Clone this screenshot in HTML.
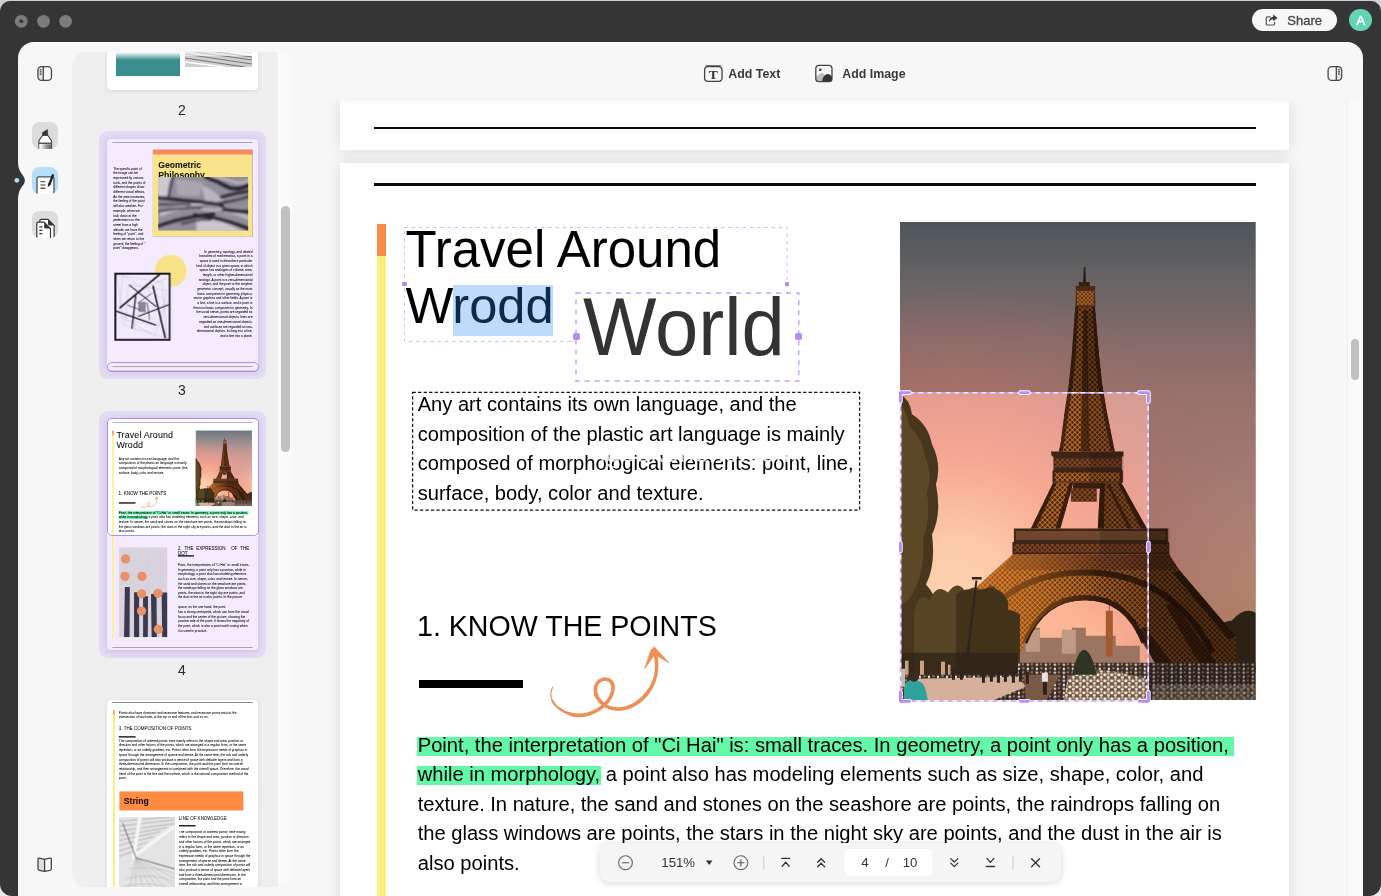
<!DOCTYPE html>
<html lang="en">
<head>
<meta charset="utf-8">
<title>PDF Editor</title>
<style>
*{box-sizing:border-box;margin:0;padding:0}
html,body{width:1381px;height:896px;overflow:hidden}
body{background:linear-gradient(#cdcdd4,#cdcdd4 40%,#ececee);font-family:"Liberation Sans",Arial,sans-serif;position:relative;color:#000}
.abs{position:absolute}
#frame{position:absolute;left:0;top:1px;width:1380.500px;height:895px;background:#353535;border-radius:10px 10px 12px 12px}
#panel{position:absolute;left:18px;top:42px;width:1345px;height:854px;background:#f7f7f7;border-radius:16px 16px 0 0;border-top:2px solid #fff;overflow:hidden}
#share{position:absolute;left:1252px;top:9px;width:84.600px;height:22.400px;border-radius:11.200px;background:#f7f7f7;color:#444;font-size:13px;line-height:22.800px}
#avatar{position:absolute;left:1349.400px;top:8.900px;width:22.600px;height:22.600px;border-radius:50%;background:#62d3b6;color:#fff;font-size:13.500px;line-height:23.500px;text-align:center;-webkit-text-stroke:.400px #fff}
#thumbs{position:absolute;left:72px;top:51.500px;width:220px;height:835px;background:#efefef;border-radius:14px;overflow:hidden}
#ttrack{position:absolute;left:205.600px;top:0;width:14.800px;height:836px;background:#fafafa}
#tthumb{position:absolute;left:209.100px;top:154.100px;width:8.800px;height:246.800px;border-radius:4.400px;background:#c1c1c1}
.tnum{position:absolute;width:40px;text-align:center;font-size:14px;color:#2b2b2b;left:90px}
#doc{position:absolute;left:293px;top:44px;width:1054px;height:852px;overflow:hidden}
.page{position:absolute;left:47px;width:949px;background:#fff;box-shadow:0 0 14px rgba(0,0,0,.12)}
#strack{position:absolute;left:1347px;top:100px;width:16px;height:796px;background:#fafafa;border-left:1px solid #f0f0f0}
#sthumb{position:absolute;left:1350.800px;top:339px;width:8.600px;height:40.600px;border-radius:4.300px;background:#c1c1c1}
.tb{position:absolute;top:66px;font-size:12.400px;color:#383838;font-weight:bold;line-height:16px;white-space:nowrap}
.zt{position:absolute;top:11.500px;font-size:13.200px;line-height:16px;color:#333;white-space:nowrap}
#zoombar{position:absolute;left:600px;top:843px;width:461px;height:39px;border-radius:9px;background:#f5f5f5;box-shadow:0 1px 7px rgba(0,0,0,.16)}
/* page 4 content (page coordinate system: 949px wide) */
.pg{position:absolute;left:0;top:0;width:949px;transform-origin:0 0}
.pg div,.pg span.a,.pg svg{position:absolute}
.t{white-space:nowrap;line-height:1}
.hl{background:#63f8a8}
.thp .t{-webkit-text-stroke:.250px currentColor}
.thp .pg{will-change:transform}
</style>
</head>
<body>
<div id="root" style="position:absolute;left:0;top:0;width:1381px;height:896px;will-change:transform">
<svg width="0" height="0" style="position:absolute">
<defs>
<linearGradient id="sky" x1="0" y1="0" x2="0" y2="1">
<stop offset="0" stop-color="#6c777c"/><stop offset=".12" stop-color="#8f8a8d"/><stop offset=".25" stop-color="#ba9592"/><stop offset=".36" stop-color="#d39d95"/><stop offset=".5" stop-color="#dea79c"/><stop offset=".65" stop-color="#f2b3a1"/><stop offset=".76" stop-color="#fbb897"/><stop offset=".88" stop-color="#f4aa84"/><stop offset="1" stop-color="#e89a70"/>
</linearGradient>
<radialGradient id="glow" cx="55" cy="372" r="310" gradientUnits="userSpaceOnUse">
<stop offset="0" stop-color="#fdd3b0" stop-opacity="1"/><stop offset=".18" stop-color="#fccaa8" stop-opacity=".97"/><stop offset=".44" stop-color="#f8a892" stop-opacity=".92"/><stop offset=".66" stop-color="#ec9c8e" stop-opacity=".72"/><stop offset=".82" stop-color="#e09890" stop-opacity=".3"/><stop offset="1" stop-color="#d89890" stop-opacity="0"/>
</radialGradient>
<radialGradient id="glow2" cx="185" cy="430" r="70" gradientUnits="userSpaceOnUse">
<stop offset="0" stop-color="#ffc49a" stop-opacity="1"/><stop offset="1" stop-color="#fbb088" stop-opacity="0"/>
</radialGradient>
<pattern id="lat" width="5" height="5" patternUnits="userSpaceOnUse">
<rect width="5" height="5" fill="#38200f"/>
<path d="M0 0L5 5M5 0L0 5" stroke="#dc7a2a" stroke-width=".95"/>
</pattern>
<pattern id="lat2" width="4" height="4" patternUnits="userSpaceOnUse">
<rect width="4" height="4" fill="#5a2c12"/>
<path d="M0 0L4 4M4 0L0 4" stroke="#f09038" stroke-width="1.1"/>
</pattern>
<pattern id="latd" width="5" height="5" patternUnits="userSpaceOnUse">
<rect width="5" height="5" fill="#3a2014"/>
<path d="M0 0L5 5M5 0L0 5" stroke="#8a4a22" stroke-width="1.1"/>
</pattern>
<pattern id="crowd" width="9" height="8" patternUnits="userSpaceOnUse">
<rect width="9" height="8" fill="#3a2c26"/>
<circle cx="2" cy="2" r="1.3" fill="#d8c4b4"/><circle cx="6.5" cy="5.5" r="1.2" fill="#8d7466"/><circle cx="6" cy="1.5" r="1" fill="#c59a7c"/><rect x="1" y="5" width="2" height="2.4" fill="#e6e0da"/>
</pattern>
<pattern id="flow" width="7" height="6" patternUnits="userSpaceOnUse">
<rect width="7" height="6" fill="#6a5646"/>
<circle cx="2" cy="2" r="1.6" fill="#fbeee0"/><circle cx="5.5" cy="4.5" r="1.5" fill="#f3dcc6"/><circle cx="5.5" cy="1" r="1" fill="#e9c9a9"/>
</pattern>
<linearGradient id="wavebg" x1="0" y1="0" x2="0" y2="1"><stop offset="0" stop-color="#a39fa9"/><stop offset=".5" stop-color="#85808c"/><stop offset="1" stop-color="#a09ba6"/></linearGradient>
<pattern id="wave" width="14" height="12" patternUnits="userSpaceOnUse"><path d="M0 3Q3.500 0 7 3T14 3M0 9Q3.500 6 7 9T14 9" fill="none" stroke="#2e2a38" stroke-width="2.200"/></pattern>
<linearGradient id="legglow" x1="60" y1="0" x2="200" y2="0" gradientUnits="userSpaceOnUse"><stop offset="0" stop-color="#ff9630" stop-opacity=".55"/><stop offset=".55" stop-color="#ff9630" stop-opacity=".32"/><stop offset="1" stop-color="#ff9630" stop-opacity="0"/></linearGradient>
<linearGradient id="legshade" x1="190" y1="0" x2="300" y2="0" gradientUnits="userSpaceOnUse"><stop offset="0" stop-color="#24120a" stop-opacity="0"/><stop offset=".5" stop-color="#24120a" stop-opacity=".32"/><stop offset="1" stop-color="#24120a" stop-opacity=".42"/></linearGradient>
<symbol id="eiffel" viewBox="0 0 356 478" preserveAspectRatio="none">
<rect width="356" height="478" fill="url(#sky)"/>
<rect width="356" height="478" fill="url(#glow)"/>
<rect width="356" height="478" fill="url(#glow2)"/>
<!-- distant buildings under the arch -->
<path d="M120 430v-18h6v-7h14v10h22v-4h10v-6h14v8h30v10h24v22h-120z" fill="#9a7662"/>
<path d="M126 407h14v22h-14zM162 407h14v24h-14z" fill="#c09a84"/>
<path d="M206 388h7v46h-7z" fill="#a65a30"/><path d="M209 380h1v10h-1z" fill="#a65a30"/>
<!-- right trees -->
<path d="M296 424q8-16 18-12q6-14 18-14q12-14 24-8v60h-60z" fill="#3e2e1e"/>
<!-- tower: antenna, cabin -->
<path d="M184 45h1.400l1 19h-3.400z" fill="#3b2a22"/>
<path d="M179 60h11v4h-11z" fill="#45301f"/>
<path d="M175.500 64h20.200l-.6 4 .6 17.500h-20.200l.6-17.500z" fill="#6a3a1a"/>
<path d="M177 69h17v14h-17z" fill="url(#lat2)"/>
<!-- spire -->
<path d="M175.400 85h19.700l4.100 48 3.100 29 5 29 5.800 29 1.900 9h-56l1.900-9 3.700-29 4.400-29 2.900-29z" fill="url(#lat)"/>
<path d="M183.500 88h3.400l2.500 141h-8.400z" fill="#351a0b" opacity=".7"/>
<path d="M175.400 85l-3.500 48-2.900 29-4.400 29-3.700 29-1.900 9h4l5.500-38 4.500-29 3-29 2.500-48zM195.100 85l4.100 48 3.100 29 5 29 5.800 29 1.900 9h-4l-7.700-38-5-29-3-29-2.300-48z" fill="#2e170a" opacity=".7"/>
<!-- second platform -->
<path d="M151 229h72.600v5h-1.600v14h1v12.400h-70.400v-12.400h1v-14h-1.600z" fill="#3e2416"/>
<path d="M154 236h67v9h-67z" fill="url(#latd)"/>
<path d="M155 250h65v9h-65z" fill="url(#lat)"/>
<!-- mid legs -->
<path d="M153.300 260.400h20.100l-12.900 45.600h-29.500z" fill="url(#lat)"/>
<path d="M200.500 260.400h21l25.500 45.600h-49z" fill="url(#lat)"/>
<path d="M171 266h26v13.400h-26z" fill="url(#latd)"/>
<path d="M173.400 260.400h27.100l.4 6h-28z" fill="#3a1d0d"/>
<path d="M153.300 260.400l-22.300 45.600h5l21-45.600zM221.500 260.400l25.500 45.600h-6l-23-45.600z" fill="#2e170a" opacity=".85"/>
<path d="M173.400 260.400l-12.900 45.600h-5l14-45.600zM200.500 260.400l-2.500 45.600h6l1-45.600z" fill="#2e170a" opacity=".85"/>
<path d="M210 262l22 44h-4l-21-44z" fill="#2e170a" opacity=".7"/>
<!-- first platform -->
<path d="M114 306h154v13.500h1.500v12.500h-157v-12.500h1.500z" fill="#3c2619"/>
<path d="M116 308.500h150v9h-150z" fill="#70472c"/>
<path d="M114 321.500h155v8.500h-155z" fill="url(#latd)"/>
<!-- base with arch -->
<path d="M112.500 332h157l10 15.500 56.500 66v32h-78l-14-27q-18-41-59-41q-41 0-59 41l-14 27h-60v-38l26-44z" fill="url(#lat)"/>
<path d="M112.500 332h157l8 15.500h-174z" fill="url(#latd)"/>
<path d="M62 430q36-80 123-80q87 0 128 80" fill="none" stroke="#331a0c" stroke-width="6"/>
<path d="M125 420q18-45 60-45q42 0 59 45" fill="none" stroke="#331a0c" stroke-width="5"/>
<path d="M279.500 347.500l56.500 66-7 3-56-66z" fill="#2e170a" opacity=".8"/>
<path d="M258 445l-22-36 9-5 31 41zM302 445l-36-62 8-4 46 66z" fill="#2a1408" opacity=".7"/>
<path d="M100 380l-30 50h12l28-50z" fill="#2a1408" opacity=".6"/>
<!-- shading -->
<path d="M186 88l9 -3 4.100 48 3.100 29 5 29 5.800 29 1.900 9h-27z" fill="#24120a" opacity=".28"/>
<path d="M200.500 260.400h21l25.500 45.600h-49z" fill="#24120a" opacity=".38"/>
<path d="M190 229h33.600v31.400h-33.600z" fill="#24120a" opacity=".25"/>
<path d="M200 306h69.500v26h-69.500z" fill="#24120a" opacity=".25"/>
<path d="M190 332h79.500l10 15.500 56.500 66v32h-78l-14-27q-16-38-54-41z" fill="url(#legshade)"/>
<path d="M112.500 332H200V378.500Q192 377.500 185 377.500Q144 377.500 126 418.500L112 445.500H52V407.500L78 363.500Z" fill="url(#legglow)"/>
<!-- left trees -->
<path d="M0 172q10 5 12 20q16 10 20 30q10 20 4 40q6 30-4 50q4 30-6 50q10 10 14 30l2 66h-42z" fill="#46361d"/>
<path d="M0 182q8 8 9 22q14 12 16 30q8 18 2 36q4 26-4 46q2 28-6 46q-8 20-17 20z" fill="#5c4727"/>
<path d="M14 390q6-24 16-12q6-18 18-8q10-14 18 0q8-10 18 0q8-14 14 0l8 10v76h-92z" fill="#574425"/>
<path d="M56 372q10-8 22-4q14-6 24 2l6 8v76h-52z" fill="#42321a"/>
<path d="M96 392q12-10 24 0v60h-24z" fill="#42321a"/>
<path d="M0 430h118v22h-118z" fill="#2e2318" opacity=".75"/><g fill="#c9a284"><rect x="5" y="438" width="3.500" height="22"/><rect x="20" y="438" width="4" height="24"/><rect x="41" y="439" width="4" height="24"/><rect x="48" y="442" width="2.500" height="14"/></g>
<!-- lamp post -->
<path d="M75.500 358h2l-12.500 106h-2.600z" fill="#2b2622"/><path d="M72 354.500h9.500l.5 2.500h-10z" fill="#2b2622"/>
<!-- ground, crowd -->
<path d="M0 452H118V440H356V478H0Z" fill="url(#crowd)"/>
<path d="M14 456l104 -2 8 10-34 14h-78z" fill="#d6b09a"/>
<path d="M124 452h36l-14 26h-20z" fill="#7a5844"/>
<path d="M168 454q30-12 60-2l20 4v22h-84z" fill="url(#flow)"/>
<path d="M252 462h104v16h-104z" fill="url(#flow)" opacity=".55"/>
<path d="M176 438q8-22 17 0l4 14h-25z" fill="#2e3424"/>
<g fill="#2a2320"><rect x="82" y="448" width="3" height="12"/><rect x="90" y="447" width="3" height="12"/><rect x="97" y="449" width="3" height="11"/><rect x="104" y="447" width="3" height="12"/><rect x="112" y="448" width="3" height="12"/><rect x="119" y="447" width="3" height="12"/><rect x="126" y="449" width="3" height="12"/><rect x="143" y="452" width="4" height="20"/><rect x="52" y="447" width="3" height="10"/><rect x="60" y="447" width="3" height="10"/></g>
<rect x="142" y="450" width="6" height="9" fill="#e9e4e0"/>
<path d="M4 478v-12q0-8 6-8h6q8 0 10 10l2 10z" fill="#2fa39a"/><circle cx="14" cy="454" r="5" fill="#3a2a24"/>
<rect x="0" y="446" width="5" height="18" fill="#c9b8b0"/>
</symbol>
</defs>
</svg>
<div id="frame"></div>
<svg class="abs" style="left:0;top:0" width="80" height="40"><g fill="#7c7c7c"><circle cx="21.300" cy="21.300" r="6.400"/><circle cx="43.500" cy="21.300" r="6.400"/><circle cx="65.600" cy="21.300" r="6.400"/></g><circle cx="21.300" cy="21.300" r="2" fill="#3a3a3a"/></svg>
<div id="share"><svg class="abs" style="left:12px;top:4px" width="16" height="15" viewBox="0 0 16 15"><path d="M6.500 3.800H3.300Q2.300 3.800 2.300 4.800V11Q2.300 12 3.300 12H9.600Q10.600 12 10.600 11V9" fill="none" stroke="#555" stroke-width="1.200"/><path d="M9.200 1.600L13.600 5L9.200 8.300V6.300Q6.300 6.300 4.900 9.300Q5.200 4 9.200 3.700Z" fill="#3a3a3a"/></svg><span style="position:absolute;left:35.300px;top:.800px;-webkit-text-stroke:.300px #444">Share</span></div>
<div id="avatar">A</div>
<div id="panel"></div>
<!-- left rail bump + dot -->
<svg class="abs" style="left:17px;top:158px" width="12" height="46" viewBox="0 0 12 46"><path d="M0 0H1V3C1 10 3 13.500 5.200 16.500C7 19 7.900 20.500 7.900 22.400C7.900 24.300 7 25.800 5.200 28.300C3 31.300 1 34.800 1 42.500V46H0Z" fill="#353535"/></svg>
<svg class="abs" style="left:13px;top:176px" width="8" height="9" viewBox="0 0 8 9"><circle cx="3.850" cy="4.300" r="2.350" fill="#b4dcf8"/></svg>
<!-- rail icons -->
<svg class="abs" style="left:36px;top:64px" width="18" height="18" viewBox="0 0 18 18"><path d="M1.900 5.800Q1.900 2.600 5.100 2.600H7.200V16.400H5.100Q1.900 16.400 1.900 13.200Z" fill="#e2e2e2"/><rect x="1.900" y="2.600" width="13.600" height="13.800" rx="3.600" fill="none" stroke="#484848" stroke-width="1.300"/><path d="M7.300 2.600V16.400" stroke="#484848" stroke-width="1.300"/><path d="M3.800 5.700H5.500M3.800 7.900H5.500M3.800 10.100H5.500" stroke="#333" stroke-width="1.100"/></svg>
<div class="abs" style="left:31.500px;top:122px;width:26.600px;height:26.800px;border-radius:7.500px;background:#dcdcdc;overflow:hidden">
<svg class="abs" style="left:0;top:0" width="27" height="27" viewBox="31.500 122 27 27"><defs><linearGradient id="hg" x1="0" y1="0" x2="1" y2="0"><stop offset="0" stop-color="#fff"/><stop offset=".25" stop-color="#ddd"/><stop offset=".6" stop-color="#999"/><stop offset="1" stop-color="#666"/></linearGradient></defs>
<path d="M42.100 135.300L38.400 140.600V150H51V140.600L47.200 135.300Z" fill="#fff" stroke="#444" stroke-width="1.100" stroke-linejoin="round"/>
<path d="M39 144.300H50.400V150H39Z" fill="url(#hg)"/>
<path d="M38.400 142.400H51V143.900H38.400Z" fill="#555"/>
<path d="M42.100 132.400L47 129.600L47.300 135.300H42.100Z" fill="#333" stroke="#333" stroke-width=".6" stroke-linejoin="round"/></svg></div>
<div class="abs" style="left:31.500px;top:166.700px;width:26.600px;height:27px;border-radius:7.500px;background:#b4defa;overflow:hidden">
<svg class="abs" style="left:0;top:0" width="27" height="27" viewBox="31.500 166.700 27 27">
<path d="M36.500 195V178.300Q36.500 176.500 38.300 176.500H51.700Q53.500 176.500 53.500 178.300V195Z" fill="#fff" stroke="#4a4f55" stroke-width="1.300"/>
<path d="M40 181.500H44.800M40 184.700H44.800" stroke="#333" stroke-width="1.100"/><path d="M40 188H44.800" stroke="#555" stroke-width="1.600"/>
<path d="M52.300 175.100L49.200 183.300" stroke="#222" stroke-width="2.500" stroke-linecap="round"/><path d="M47.800 182.800L50.400 184L47.200 187.100Z" fill="#222"/></svg></div>
<div class="abs" style="left:31.500px;top:211px;width:26.600px;height:26.600px;border-radius:7.500px;background:#dcdcdc;overflow:hidden">
<svg class="abs" style="left:0;top:0" width="27" height="27" viewBox="31.500 211 27 27">
<path d="M39.300 239V220.800Q39.300 219.400 40.700 219.400H47.500L53.600 225.500V239Z" fill="#fff" stroke="#333" stroke-width="1.200" stroke-linejoin="round"/>
<path d="M47.500 219.600V224Q47.500 225.400 48.900 225.400H53.400Z" fill="#333"/>
<path d="M36.300 239V223.600Q36.300 222.200 37.700 222.200H43.600L50 228.600V239Z" fill="#fff" stroke="#333" stroke-width="1.200" stroke-linejoin="round"/>
<path d="M43.700 222.500V227.200Q43.700 228.500 45 228.500H49.700Z" fill="#333"/>
<path d="M38.800 226.800H41.900M38.800 230.300H41.900M38.800 233.600H41.900" stroke="#333" stroke-width="1.200"/></svg></div>
<svg class="abs" style="left:36px;top:855px" width="18" height="19" viewBox="36 855 18 19"><path d="M38 859.300Q38 857.900 39.400 858.100L44.600 859.200V871.400L39.400 870.400Q38 870.100 38 868.800Z" fill="#dedede"/><path d="M44.600 859.300L49.900 858.100Q51.300 857.900 51.300 859.300V868.800Q51.300 870.100 49.900 870.400L44.600 871.400L39.400 870.400Q38 870.100 38 868.800V859.300Q38 857.900 39.400 858.100ZM44.600 859.300V871.400" fill="none" stroke="#444" stroke-width="1.300" stroke-linejoin="round"/></svg>
<div id="thumbs"><div class="abs" style="left:0;top:.500px;width:220px;height:835px">
<div class="abs" style="left:35px;top:-20px;width:150.900px;height:57.800px;background:#fff;border-radius:4px;box-shadow:0 1px 5px rgba(0,0,0,.10);overflow:hidden"><div class="abs" style="left:9.300px;top:20px;width:63.500px;height:23.700px;background:linear-gradient(#fff 0,#3a8e8e 8px)"></div><svg class="abs" style="left:78px;top:20px" width="67" height="15" viewBox="0 0 67 15"><rect width="67" height="15" fill="#cfcfcf"/><path d="M0 2L67 12M0 6L60 15M10 0L67 8M30 0L67 5" stroke="#555" stroke-width="1.200" opacity=".7"/><path d="M0 10L40 15M45 0L67 3" stroke="#fff" stroke-width="1.500"/><rect width="67" height="4" fill="#fff" opacity=".6"/></svg></div>
<div class="tnum" style="top:50.300px">2</div>
<div class="abs" style="left:27px;top:79.200px;width:167px;height:247.500px;border-radius:9px;background:#e3dbf3"></div>
<div class="abs thp" style="left:35px;top:87.200px;width:150.900px;height:231px;background:#f4ecfe;border-radius:4px;overflow:hidden;box-shadow:0 1px 6px rgba(80,50,140,.2)"><div class="pg" style="transform:scale(0.15901)">
<div style="left:34px;top:20.8px;width:882px;height:2.6px;background:#0a0a0a"></div>
<div style="left:288px;top:66px;width:626px;height:33px;background:#f58a5c"></div>
<div style="left:288px;top:98.7px;width:626px;height:512px;background:#f9e48c"></div>
<div class="t" style="left:322px;top:139.87px;font-size:54.5px;line-height:54.5px;font-weight:bold;color:#111">Geometric</div>
<div class="t" style="left:322px;top:201.87px;font-size:54.5px;line-height:54.5px;font-weight:bold;color:#111">Philosophy</div>
<svg style="left:322px;top:239px" width="566" height="338" viewBox="0 0 566 338"><defs><filter id="wb" x="-10%" y="-10%" width="120%" height="120%"><feGaussianBlur stdDeviation="8"/></filter><clipPath id="wc"><rect width="566" height="338"/></clipPath></defs><g clip-path="url(#wc)"><rect width="566" height="338" fill="#9d99a4"/><g filter="url(#wb)" fill="none" stroke-linecap="round"><path d="M-10 -10L95 -10L65 118L-10 128Z" fill="#dedae2" stroke="none"/><path d="M240 268Q380 250 540 345L240 350Z" fill="#dcd8e0" stroke="none"/><path d="M270 50Q360 80 410 150L300 165Z" fill="#c9c5ce" stroke="none"/><path d="M110 20Q200 10 280 40L260 120L120 115Z" fill="#b8b4be" stroke="none"/><path d="M20 232Q140 184 270 178" stroke="#dad6de" stroke-width="26"/><path d="M420 215Q500 225 575 262" stroke="#cfcbd4" stroke-width="22"/><path d="M299 0Q360 20 425 58T585 44" stroke="#28232f" stroke-width="24"/><path d="M330 -8Q420 8 470 28T585 12" stroke="#e0dce4" stroke-width="10"/><path d="M-5 128Q148 148 289 160T400 192T580 220" stroke="#28232f" stroke-width="21"/><path d="M-5 220Q148 192 279 188" stroke="#433e4d" stroke-width="14"/><path d="M-5 310Q123 264 249 246T345 234" stroke="#28232f" stroke-width="21"/><path d="M229 238Q350 254 450 284T580 332" stroke="#28232f" stroke-width="21"/><path d="M395 127Q500 97 580 88" stroke="#2f2a38" stroke-width="19"/><path d="M385 164Q500 148 580 120" stroke="#433e4d" stroke-width="16"/><path d="M92 0Q72 60 64 128" stroke="#433e4d" stroke-width="16"/><path d="M150 294Q260 264 330 270" stroke="#433e4d" stroke-width="12"/><path d="M-5 172Q100 172 200 174" stroke="#565160" stroke-width="14"/><path d="M280 200Q340 215 400 200" stroke="#d8d4dc" stroke-width="12"/></g><rect width="566" height="338" fill="url(#wave)" opacity=".3"/></g></svg>
<div class="t" style="left:39px;top:175.96px;font-size:20.13px;line-height:20.13px;">The specific point of</div>
<div class="t" style="left:39px;top:205.46px;font-size:20.13px;line-height:20.13px;">the image can be</div>
<div class="t" style="left:39px;top:234.96px;font-size:20.13px;line-height:20.13px;">expressed by various</div>
<div class="t" style="left:39px;top:264.46px;font-size:20.13px;line-height:20.13px;">tools, and the points of</div>
<div class="t" style="left:39px;top:293.96px;font-size:20.13px;line-height:20.13px;">different shapes show</div>
<div class="t" style="left:39px;top:323.46px;font-size:20.13px;line-height:20.13px;">different visual effects.</div>
<div class="t" style="left:39px;top:352.96px;font-size:20.13px;line-height:20.13px;">As the area increases,</div>
<div class="t" style="left:39px;top:382.46px;font-size:20.13px;line-height:20.13px;">the feeling of the point</div>
<div class="t" style="left:39px;top:411.96px;font-size:20.13px;line-height:20.13px;">will also weaken. For</div>
<div class="t" style="left:39px;top:441.46px;font-size:20.13px;line-height:20.13px;">example, when we</div>
<div class="t" style="left:39px;top:470.96px;font-size:20.13px;line-height:20.13px;">look down at the</div>
<div class="t" style="left:39px;top:500.46px;font-size:20.13px;line-height:20.13px;">pedestrians on the</div>
<div class="t" style="left:39px;top:529.96px;font-size:20.13px;line-height:20.13px;">street from a high</div>
<div class="t" style="left:39px;top:559.46px;font-size:20.13px;line-height:20.13px;">altitude, we have the</div>
<div class="t" style="left:39px;top:588.96px;font-size:20.13px;line-height:20.13px;">feeling of "point", and</div>
<div class="t" style="left:39px;top:618.46px;font-size:20.13px;line-height:20.13px;">when we return to the</div>
<div class="t" style="left:39px;top:647.96px;font-size:20.13px;line-height:20.13px;">ground, the feeling of "</div>
<div class="t" style="left:39px;top:677.46px;font-size:20.13px;line-height:20.13px;">point" disappears.</div>
<svg style="left:301px;top:728px" width="200" height="200"><circle cx="100" cy="100" r="100" fill="#f6e388"/></svg>
<div class="t" style="right:34.5px;top:696.96px;font-size:20.13px;line-height:20.13px;text-align:right">In geometry, topology, and related</div>
<div class="t" style="right:34.5px;top:726.46px;font-size:20.13px;line-height:20.13px;text-align:right">branches of mathematics, a point in a</div>
<div class="t" style="right:34.5px;top:755.96px;font-size:20.13px;line-height:20.13px;text-align:right">space is used to describe a particular</div>
<div class="t" style="right:34.5px;top:785.46px;font-size:20.13px;line-height:20.13px;text-align:right">kind of object in a given space, in which</div>
<div class="t" style="right:34.5px;top:814.96px;font-size:20.13px;line-height:20.13px;text-align:right">space has analogies of volume, area,</div>
<div class="t" style="right:34.5px;top:844.46px;font-size:20.13px;line-height:20.13px;text-align:right">length, or other higher-dimensional</div>
<div class="t" style="right:34.5px;top:873.96px;font-size:20.13px;line-height:20.13px;text-align:right">analogs. A point is a zero-dimensional</div>
<div class="t" style="right:34.5px;top:903.46px;font-size:20.13px;line-height:20.13px;text-align:right">object, and the point is the simplest</div>
<div class="t" style="right:34.5px;top:932.96px;font-size:20.13px;line-height:20.13px;text-align:right">geometric concept, usually as the most</div>
<div class="t" style="right:34.5px;top:962.46px;font-size:20.13px;line-height:20.13px;text-align:right">basic component in geometry, physics,</div>
<div class="t" style="right:34.5px;top:991.96px;font-size:20.13px;line-height:20.13px;text-align:right">vector graphics and other fields. A point is</div>
<div class="t" style="right:34.5px;top:1021.46px;font-size:20.13px;line-height:20.13px;text-align:right">a line, a line is a surface, and a point is</div>
<div class="t" style="right:34.5px;top:1050.96px;font-size:20.13px;line-height:20.13px;text-align:right">the most basic component in geometry. In</div>
<div class="t" style="right:34.5px;top:1080.46px;font-size:20.13px;line-height:20.13px;text-align:right">the usual sense, points are regarded as</div>
<div class="t" style="right:34.5px;top:1109.96px;font-size:20.13px;line-height:20.13px;text-align:right">zero-dimensional objects, lines are</div>
<div class="t" style="right:34.5px;top:1139.46px;font-size:20.13px;line-height:20.13px;text-align:right">regarded as one-dimensional objects,</div>
<div class="t" style="right:34.5px;top:1168.96px;font-size:20.13px;line-height:20.13px;text-align:right">and surfaces are regarded as two-</div>
<div class="t" style="right:34.5px;top:1198.46px;font-size:20.13px;line-height:20.13px;text-align:right">dimensional objects. Inching into a line,</div>
<div class="t" style="right:34.5px;top:1227.96px;font-size:20.13px;line-height:20.13px;text-align:right">and a line into a plane.</div>
<svg style="left:46px;top:841px" width="355" height="428" viewBox="0 0 354 428"><rect x="6" y="6" width="342" height="416" fill="#f1eafb" stroke="#17131d" stroke-width="12"/><g fill="none" stroke="#8d8896" stroke-width="1.6" opacity=".7"><path d="M14 14L60 330L330 410L300 60Z"/><path d="M50 20L30 260L250 400L335 180Z"/><path d="M90 75L70 300L280 330L330 110Z"/><path d="M330 30L120 140L130 370"/><path d="M20 290L200 240L340 400"/></g><path d="M149 186L199 183L196 248L152 244Z" fill="#8a8692"/><g fill="none" stroke="#1c1822" stroke-linecap="round"><path d="M283 12L36 219" stroke-width="11"/><path d="M94 78L261 212" stroke-width="6.500"/><path d="M243 85L319 407" stroke-width="10"/><path d="M11 241L257 328" stroke-width="9"/><path d="M134 146L110 349" stroke-width="8"/><path d="M152 273L341 201" stroke-width="6.500"/><path d="M83 204L160 233" stroke-width="4"/><path d="M232 132L149 190" stroke-width="4"/><path d="M207 190L221 295" stroke-width="4"/></g></svg>
<div style="left:34px;top:1431.5px;width:882px;height:2.6px;background:#0a0a0a"></div>
</div></div>
<div class="abs" style="left:34.500px;top:310px;width:152px;height:9.500px;border:1.600px solid #b58bf0;border-radius:5px"></div>
<div class="tnum" style="top:330.300px">3</div>
<div class="abs" style="left:27px;top:359.200px;width:167px;height:247.300px;border-radius:9px;background:#e3dbf3"></div>
<div class="abs thp" style="left:35px;top:366.750px;width:150.900px;height:231px;background:#f4ecfe;border-radius:4px;overflow:hidden;box-shadow:0 1px 6px rgba(80,50,140,.2)"><div class="abs" style="left:0;top:0;width:151px;height:117.500px;background:#fff"></div><div class="pg" style="transform:scale(0.15901)">
<div style="left:34px;top:20.8px;width:882px;height:2.6px;background:#0a0a0a"></div>
<div style="left:-4px;top:11px;width:949px;height:1400px">
<div style="left:37.3px;top:61px;width:8.7px;height:32.7px;background:#fb8c48"></div>
<div style="left:37.3px;top:93.7px;width:8.7px;height:1272px;background:#fdf07c"></div>
<div class="t" style="left:63px;top:62.10px;font-size:56px;line-height:56px;letter-spacing:.8px">Travel Around</div>
<div class="t" style="left:63px;top:121.60px;font-size:56px;line-height:56px;letter-spacing:.8px">Wrodd</div>
<div class="t" style="left:77.7px;top:226.76px;font-size:20.13px;line-height:20.13px;">Any art contains its own language, and the</div>
<div class="t" style="left:77.7px;top:256.26px;font-size:20.13px;line-height:20.13px;">composition of the plastic art language is mainly</div>
<div class="t" style="left:77.7px;top:285.76px;font-size:20.13px;line-height:20.13px;">composed of morphological elements: point, line,</div>
<div class="t" style="left:77.7px;top:315.26px;font-size:20.13px;line-height:20.13px;">surface, body, color and texture.</div>
<div class="t" style="left:77px;top:444.19px;font-size:28.6px;line-height:28.6px;">1. KNOW THE POINTS</div>
<div style="left:78.8px;top:512.8px;width:104.3px;height:7.8px;background:#000"></div>
<svg style="left:200px;top:465px;overflow:visible" width="140" height="100" viewBox="540 632 140 100"><g fill="none" stroke="#ef8e56" stroke-linecap="round" stroke-linejoin="round"><path d="M552.6 686.2C550.300 691 550.400 695.500 552.200 699.500" stroke-width="1.200"/><path d="M552.200 699.500C553.800 703 556.500 705.800 560 708" stroke-width="2"/><path d="M560 708C563 710.300 566.500 712 570.500 713.200" stroke-width="2.800"/><path d="M570.500 713.200C582 716.500 595.500 712.500 605.300 703C612 696.500 615.500 686 611 680.500C606.500 675.500 597 678.500 595.500 686.500C594.200 694 599 700.500 606.500 705.500C620 712 636 706 647 692.500C656.500 680.500 658.800 668 655 651" stroke-width="3.600"/><path d="M651 649L654.400 646.200L657.600 649.600L645 667.200ZM654.400 646.200L668.900 661.800L655.800 654Z" fill="#ef8e56" stroke-width=".8"/></g></svg>
<svg style="left:560.3px;top:59.2px" width="355.7" height="478.8"><use href="#eiffel" width="355.7" height="478.8"/></svg>
<div class="hl" style="left:77.4px;top:569px;width:816.2px;height:19.6px"></div>
<div class="hl" style="left:77.4px;top:598.2px;width:183.6px;height:19.6px"></div>
<div class="t" style="left:77.7px;top:567.12px;font-size:20.18px;line-height:20.18px;">Point, the interpretation of "Ci Hai" is: small traces. In geometry, a point only has a position,</div>
<div class="t" style="left:77.7px;top:596.62px;font-size:20.18px;line-height:20.18px;">while in morphology, a point also has modeling elements such as size, shape, color, and</div>
<div class="t" style="left:77.7px;top:626.12px;font-size:20.18px;line-height:20.18px;letter-spacing:-.03px">texture. In nature, the sand and stones on the seashore are points, the raindrops falling on</div>
<div class="t" style="left:77.7px;top:655.62px;font-size:20.18px;line-height:20.18px;letter-spacing:-.021px">the glass windows are points, the stars in the night sky are points, and the dust in the air is</div>
<div class="t" style="left:77.7px;top:685.12px;font-size:20.18px;line-height:20.18px;">also points.</div>
</div>
<svg style="left:76px;top:807px" width="304" height="566" viewBox="0 0 333 620" preserveAspectRatio="none"><rect width="333" height="620" fill="#d9d3de"/><path d="M75 0V620M140 0V620M205 0V620M268 0V620M0 95H333M0 190H333" stroke="#cfcad0" stroke-width="2"/><g fill="#3a3a4e"><path d="M40 274h34l-2 346h-38z"/><path d="M103 309h35v311h-35z"/><path d="M165 337h34l-1 283h-33z"/><path d="M220 322h38l2 298h-36z"/><path d="M293 312h40v308h-36z"/></g><g fill="#e8916a"><circle cx="45" cy="80" r="32"/><circle cx="40" cy="200" r="32"/><circle cx="158" cy="200" r="32"/><circle cx="155" cy="320" r="32"/><circle cx="268" cy="317" r="32"/><circle cx="155" cy="439" r="32"/><circle cx="271" cy="564" r="32"/></g></svg>
<div class="t" style="left:446px;top:801.04px;width:448px;font-size:28.3px;line-height:28.3px;text-align:justify;text-align-last:justify;white-space:normal">2. THE EXPRESSION &nbsp;OF THE</div>
<div class="t" style="left:446px;top:831.04px;font-size:28.3px;line-height:28.3px;">DOT</div>
<div style="left:446px;top:857px;width:101px;height:8px;background:#000"></div>
<div class="t" style="left:446px;top:906.96px;font-size:20.13px;line-height:20.13px;">Point, the interpretation of "Ci Hai" is: small traces.</div>
<div class="t" style="left:446px;top:936.16px;font-size:20.13px;line-height:20.13px;">In geometry, a point only has a position, while in</div>
<div class="t" style="left:446px;top:965.36px;font-size:20.13px;line-height:20.13px;">morphology, a point also has modeling elements</div>
<div class="t" style="left:446px;top:994.56px;font-size:20.13px;line-height:20.13px;">such as size, shape, color, and texture. In nature,</div>
<div class="t" style="left:446px;top:1023.76px;font-size:20.13px;line-height:20.13px;">the sand and stones on the seashore are points,</div>
<div class="t" style="left:446px;top:1052.96px;font-size:20.13px;line-height:20.13px;">the raindrops falling on the glass windows are</div>
<div class="t" style="left:446px;top:1082.16px;font-size:20.13px;line-height:20.13px;">points, the stars in the night sky are points, and</div>
<div class="t" style="left:446px;top:1111.36px;font-size:20.13px;line-height:20.13px;">the dust in the air is also points. In the picture</div>
<div class="t" style="left:446px;top:1173.96px;font-size:20.13px;line-height:20.13px;">space, on the one hand, the point</div>
<div class="t" style="left:446px;top:1203.16px;font-size:20.13px;line-height:20.13px;">has a strong centripetal, which can form the visual</div>
<div class="t" style="left:446px;top:1232.36px;font-size:20.13px;line-height:20.13px;">focus and the center of the picture, showing the</div>
<div class="t" style="left:446px;top:1261.56px;font-size:20.13px;line-height:20.13px;">positive side of the point; It shows the negativity of</div>
<div class="t" style="left:446px;top:1290.76px;font-size:20.13px;line-height:20.13px;">the point, which is also a point worth noting when</div>
<div class="t" style="left:446px;top:1319.96px;font-size:20.13px;line-height:20.13px;">it is used in practice.</div>
<div style="left:34px;top:1433.5px;width:882px;height:2.6px;background:#0a0a0a"></div>
</div></div>
<div class="abs" style="left:34.500px;top:366.200px;width:152px;height:118px;border:1.600px solid #b58bf0;border-radius:5px"></div>
<div class="tnum" style="top:610.300px">4</div>
<div class="abs thp" style="left:35px;top:647.500px;width:150.900px;height:231px;background:#fff;border-radius:4px;overflow:hidden;box-shadow:0 1px 5px rgba(0,0,0,.10)"><div class="pg" style="transform:scale(0.15901)">
<div style="left:34px;top:15px;width:882px;height:2.6px;background:#0a0a0a"></div>
<div style="left:36px;top:60px;width:8.7px;height:32px;background:#fb8c48"></div>
<div style="left:36px;top:92px;width:8.7px;height:1272px;background:#fdf07c"></div>
<div class="t" style="left:74px;top:67.96px;font-size:20.13px;line-height:20.13px;">Points also have dominant and recessive features, and recessive points exist at the</div>
<div class="t" style="left:74px;top:97.46px;font-size:20.13px;line-height:20.13px;">intersection of two lines, at the top or end of the line, and so on.</div>
<div class="t" style="left:74px;top:167.04px;font-size:28.3px;line-height:28.3px;">3. THE COMPOSITION OF POINTS</div>
<div style="left:74px;top:228px;width:106px;height:7.8px;background:#000"></div>
<div class="t" style="left:74px;top:245.96px;font-size:20.13px;line-height:20.13px;">The composition of ordered points: here mainly refers to the shape and area, position or</div>
<div class="t" style="left:74px;top:275.36px;font-size:20.13px;line-height:20.13px;">direction and other factors of the points, which are arranged in a regular form, or the same</div>
<div class="t" style="left:74px;top:304.76px;font-size:20.13px;line-height:20.13px;">repetition, or an orderly gradient, etc. Points often form the expression needs of graphics in</div>
<div class="t" style="left:74px;top:334.16px;font-size:20.13px;line-height:20.13px;">space through the arrangement of sparse and dense. At the same time, the rich and orderly</div>
<div class="t" style="left:74px;top:363.56px;font-size:20.13px;line-height:20.13px;">composition of points will also produce a sense of space with delicate layers and form a</div>
<div class="t" style="left:74px;top:392.96px;font-size:20.13px;line-height:20.13px;">three-dimensional dimension. In the composition, the point and the point form an overall</div>
<div class="t" style="left:74px;top:422.36px;font-size:20.13px;line-height:20.13px;">relationship, and their arrangement is combined with the overall space. Therefore, the visual</div>
<div class="t" style="left:74px;top:451.76px;font-size:20.13px;line-height:20.13px;">trend of the point is the line and the surface, which is the rational composition method of the</div>
<div class="t" style="left:74px;top:481.16px;font-size:20.13px;line-height:20.13px;">point.</div>
<div style="left:77.5px;top:575px;width:774px;height:116px;background:#ff8c42"></div>
<div class="t" style="left:106px;top:607.29px;font-size:54px;line-height:54px;font-weight:bold;color:#111">String</div>
<svg style="left:77.5px;top:733px" width="349" height="460" viewBox="0 0 349 460"><rect width="349" height="460" fill="#e4e4e4"/><g fill="none" stroke="#8a8a8a" stroke-width="3"><path d="M0 30L349 0M0 60L349 20M0 90L349 45M0 120L300 70M0 150L260 95M0 180L220 125M0 215L180 160M0 250L150 195"/></g><path d="M130 0L90 250L349 60" fill="none" stroke="#f6f6f6" stroke-width="22"/><path d="M20 40L105 260L349 330" fill="none" stroke="#555" stroke-width="5"/><g fill="none" stroke="#9a9a9a" stroke-width="2"><path d="M105 260L60 460M105 260L100 460M105 260L150 460M105 260L200 460M105 260L250 460M105 260L300 460M105 260L349 440M105 260L349 390"/><path d="M60 330Q200 300 349 360M40 390Q200 350 349 410M20 440Q200 400 349 455"/></g></svg>
<div class="t" style="left:452px;top:732.04px;font-size:28.3px;line-height:28.3px;color:#111">LINE OF KNOWLEDGE</div>
<div style="left:452px;top:787px;width:105px;height:7.8px;background:#000"></div>
<div class="t" style="left:452px;top:821.96px;font-size:20.13px;line-height:20.13px;">The composition of ordered points: here mainly</div>
<div class="t" style="left:452px;top:851.56px;font-size:20.13px;line-height:20.13px;">refers to the shape and area, position or direction</div>
<div class="t" style="left:452px;top:881.16px;font-size:20.13px;line-height:20.13px;">and other factors of the points, which are arranged</div>
<div class="t" style="left:452px;top:910.76px;font-size:20.13px;line-height:20.13px;">in a regular form, or the same repetition, or an</div>
<div class="t" style="left:452px;top:940.36px;font-size:20.13px;line-height:20.13px;">orderly gradient, etc. Points often form the</div>
<div class="t" style="left:452px;top:969.96px;font-size:20.13px;line-height:20.13px;">expression needs of graphics in space through the</div>
<div class="t" style="left:452px;top:999.56px;font-size:20.13px;line-height:20.13px;">arrangement of sparse and dense. At the same</div>
<div class="t" style="left:452px;top:1029.16px;font-size:20.13px;line-height:20.13px;">time, the rich and orderly composition of points will</div>
<div class="t" style="left:452px;top:1058.76px;font-size:20.13px;line-height:20.13px;">also produce a sense of space with delicate layers</div>
<div class="t" style="left:452px;top:1088.36px;font-size:20.13px;line-height:20.13px;">and form a three-dimensional dimension. In the</div>
<div class="t" style="left:452px;top:1117.96px;font-size:20.13px;line-height:20.13px;">composition, the point and the point form an</div>
<div class="t" style="left:452px;top:1147.56px;font-size:20.13px;line-height:20.13px;">overall relationship, and their arrangement is</div>
<div class="t" style="left:452px;top:1177.16px;font-size:20.13px;line-height:20.13px;">combined with the overall space. Therefore, the</div>
</div></div>
</div><div id="ttrack"></div><div id="tthumb"></div>
</div>
<div id="doc">
<div class="page" id="p3" style="top:56px;height:49.5px"><div class="abs" style="left:34px;top:27px;width:882px;height:2.4px;background:#0a0a0a"></div></div>
<div class="page" id="p4" style="top:118.5px;height:1452px"><div class="pg">
<div style="left:34px;top:20.8px;width:882px;height:2.6px;background:#0a0a0a"></div>
<div style="left:0px;top:0px;width:949px;height:1400px">
<div style="left:37.3px;top:61px;width:8.7px;height:32.7px;background:#fb8c48"></div>
<div style="left:37.3px;top:93.7px;width:8.7px;height:1272px;background:#fdf07c"></div>
<svg style="left:60px;top:60px;overflow:visible" width="400" height="125" viewBox="60 60 400 125"><rect x="64.4" y="64.6" width="382.6" height="113.8" fill="none" stroke="#cfb4f6" stroke-width="1" stroke-dasharray="3.2 4"/></svg>
<div class="t" style="left:65.5px;top:61.73px;font-size:51px;line-height:51px;">Travel Around</div>
<div style="left:112.9px;top:122.4px;width:100px;height:50.7px;background:#bedbfb"></div>
<div class="t" style="left:65.5px;top:118.77px;font-size:50.6px;line-height:50.6px;">W<span style="color:#0b2b4d">rodd</span></div>
<div style="left:62.2px;top:119.2px;width:4.4px;height:4.4px;background:#b78df5;border-radius:1px"></div>
<div style="left:444.8px;top:119.2px;width:4.6px;height:4.4px;background:#b78df5;border-radius:1px"></div>
<div style="left:236px;top:130px;width:222.8px;height:88px;background:#fff"></div>
<svg style="left:230px;top:125px;overflow:visible" width="236" height="100" viewBox="230 125 236 100"><rect x="236" y="130" width="222.8" height="88" fill="none" stroke="#c5a3f5" stroke-width="1.4" stroke-dasharray="5 5"/></svg>
<div class="t" style="left:243.2px;top:123.81px;font-size:81.5px;line-height:81.5px;color:#333;transform:scaleX(.955);transform-origin:0 0">World</div>
<div style="left:233.2px;top:170.2px;width:7.2px;height:7.6px;background:#b78af7;border-radius:2px"></div>
<div style="left:455.2px;top:170.2px;width:7.2px;height:7.6px;background:#b78af7;border-radius:2px"></div>
<svg style="left:70px;top:227px;overflow:visible" width="452" height="122" viewBox="70 227 452 122"><rect x="72.6" y="229.4" width="447" height="117.6" fill="none" stroke="#111" stroke-width="1.25" stroke-dasharray="3.3 2.2"/></svg>
<div class="t" style="left:77.7px;top:231.76px;font-size:20.13px;line-height:20.13px;">Any art contains its own language, and the</div>
<div class="t" style="left:77.7px;top:261.26px;font-size:20.13px;line-height:20.13px;">composition of the plastic art language is mainly</div>
<div class="t" style="left:77.7px;top:290.76px;font-size:20.13px;line-height:20.13px;">composed of morphological elements: point, line,</div>
<div class="t" style="left:77.7px;top:320.26px;font-size:20.13px;line-height:20.13px;">surface, body, color and texture.</div>
<div class="t" style="left:259.5px;top:277.14px;font-size:27px;line-height:27px;color:#fff;opacity:.82">igeekphone.com</div>
<div class="t" style="left:77px;top:449.19px;font-size:28.6px;line-height:28.6px;">1. KNOW THE POINTS</div>
<div style="left:78.8px;top:517.8px;width:104.3px;height:7.8px;background:#000"></div>
<svg style="left:200px;top:470px;overflow:visible" width="140" height="100" viewBox="540 632 140 100"><g fill="none" stroke="#ef8e56" stroke-linecap="round" stroke-linejoin="round"><path d="M552.6 686.2C550.300 691 550.400 695.500 552.200 699.500" stroke-width="1.200"/><path d="M552.200 699.500C553.800 703 556.500 705.800 560 708" stroke-width="2"/><path d="M560 708C563 710.300 566.500 712 570.500 713.200" stroke-width="2.800"/><path d="M570.500 713.200C582 716.500 595.500 712.500 605.300 703C612 696.500 615.500 686 611 680.500C606.500 675.500 597 678.500 595.500 686.500C594.200 694 599 700.500 606.500 705.500C620 712 636 706 647 692.500C656.500 680.500 658.800 668 655 651" stroke-width="3.600"/><path d="M651 649L654.400 646.200L657.600 649.600L645 667.200ZM654.400 646.200L668.900 661.800L655.800 654Z" fill="#ef8e56" stroke-width=".8"/></g></svg>
<svg style="left:560.3px;top:59.2px" width="355.7" height="478.8"><use href="#eiffel" width="355.7" height="478.8"/></svg>
<div style="left:560.3px;top:59.2px;width:355.7px;height:170.6px;background:rgba(0,0,0,.28)"></div>
<div style="left:808.2px;top:229.8px;width:107.8px;height:308.2px;background:rgba(0,0,0,.28)"></div>
<svg style="left:555px;top:224px;overflow:visible" width="260" height="320" viewBox="555 224 260 320"><rect x="560.6" y="229.8" width="247.6" height="308.2" fill="none" stroke="#c4a2ee" stroke-width="1.6"/><rect x="560.6" y="229.8" width="247.6" height="308.2" fill="none" stroke="#fff" stroke-opacity=".85" stroke-width="1.6" stroke-dasharray="4.6 4.4"/><g fill="none" stroke="#fff" stroke-width="4.6" stroke-linecap="round" stroke-linejoin="round"><path d="M560.4 238.500V229.600H569.500"/><path d="M799.300 229.600H808.400V238.500"/><path d="M560.400 529V538.200H569.500"/><path d="M799.300 538.200H808.400V529"/><path d="M680.500 229.600H688.500M680.500 538.200H688.500M560.400 380V388M808.400 380V388"/></g><g fill="none" stroke="#b88cf5" stroke-width="2.900" stroke-linecap="round" stroke-linejoin="round"><path d="M560.4 238.500V229.600H569.500"/><path d="M799.300 229.600H808.400V238.500"/><path d="M560.400 529V538.200H569.500"/><path d="M799.300 538.200H808.400V529"/><path d="M680.500 229.600H688.500M680.500 538.200H688.500M560.400 380V388M808.400 380V388"/></g></svg>
<div class="hl" style="left:77.4px;top:574px;width:816.2px;height:19.6px"></div>
<div class="hl" style="left:77.4px;top:603.2px;width:183.6px;height:19.6px"></div>
<div class="t" style="left:77.7px;top:572.12px;font-size:20.18px;line-height:20.18px;">Point, the interpretation of "Ci Hai" is: small traces. In geometry, a point only has a position,</div>
<div class="t" style="left:77.7px;top:601.62px;font-size:20.18px;line-height:20.18px;">while in morphology, a point also has modeling elements such as size, shape, color, and</div>
<div class="t" style="left:77.7px;top:631.12px;font-size:20.18px;line-height:20.18px;letter-spacing:-.03px">texture. In nature, the sand and stones on the seashore are points, the raindrops falling on</div>
<div class="t" style="left:77.7px;top:660.62px;font-size:20.18px;line-height:20.18px;letter-spacing:-.021px">the glass windows are points, the stars in the night sky are points, and the dust in the air is</div>
<div class="t" style="left:77.7px;top:690.12px;font-size:20.18px;line-height:20.18px;">also points.</div>
</div>
</div></div>
</div>
<!-- toolbar mask: hides page area above y=100 with a soft fade -->
<div class="abs" style="left:293px;top:44px;width:1054px;height:54px;background:#f7f7f7"></div>
<div class="abs" style="left:293px;top:98px;width:1054px;height:7px;background:linear-gradient(#f7f7f7,rgba(247,247,247,0))"></div>
<!-- right panel icon -->
<svg class="abs" style="left:1325px;top:64px" width="20" height="18" viewBox="0 0 20 18"><path d="M11.400 2.600H13.500Q16.700 2.600 16.700 5.800V13.200Q16.700 16.400 13.500 16.400H11.400Z" fill="#e2e2e2"/><rect x="3.100" y="2.600" width="13.600" height="13.800" rx="3.600" fill="none" stroke="#484848" stroke-width="1.300"/><path d="M11.300 2.600V16.400" stroke="#484848" stroke-width="1.300"/><path d="M13.100 5.700H14.800M13.100 7.900H14.800M13.100 10.100H14.800" stroke="#333" stroke-width="1.100"/></svg>
<div id="strack"></div><div id="sthumb"></div>
<svg class="abs" style="left:702px;top:63px" width="22" height="21" viewBox="702 63 22 21"><path d="M706 65.600H720.500" stroke="#777" stroke-width="1.200" stroke-linecap="round"/><rect x="704.600" y="66.700" width="17.400" height="14.600" rx="3.400" fill="#f7f7f7" stroke="#444" stroke-width="1.300"/><text x="713.300" y="79.300" font-family="Liberation Serif,serif" font-weight="bold" font-size="13.500" text-anchor="middle" fill="#333">T</text></svg>
<div class="tb" style="left:728.300px">Add Text</div>
<svg class="abs" style="left:813px;top:62px" width="22" height="23" viewBox="813 62 22 23"><defs><clipPath id="ic"><rect x="815.800" y="65.300" width="16.200" height="16.400" rx="3.200"/></clipPath></defs><g clip-path="url(#ic)"><rect x="815" y="64" width="18" height="19" fill="#f7f7f7"/><path d="M815 82V77.500L820.500 73.500Q822.500 72.300 824 74L829 82Z" fill="#bbb"/><path d="M822 82Q822.500 76 826.500 74.200Q829.500 73.500 832.500 77V82Z" fill="#333"/></g><rect x="815.800" y="65.300" width="16.200" height="16.400" rx="3.200" fill="none" stroke="#444" stroke-width="1.300"/><circle cx="820.300" cy="69.700" r="1.300" fill="#333"/></svg>
<div class="tb" style="left:842.200px">Add Image</div>
<div id="zoombar">
<svg class="abs" style="left:0;top:0" width="461" height="39" viewBox="600 843 461 39">
<g fill="none" stroke="#555" stroke-width="1.100" stroke-linecap="round" stroke-linejoin="round">
<circle cx="625.500" cy="862.700" r="6.900" stroke="#666"/><path d="M622.300 862.700H628.700"/>
<circle cx="740.900" cy="862.700" r="6.900" stroke="#666"/><path d="M737.700 862.700H744.100M740.900 859.500V865.900"/>
<path d="M763.800 856.500V869M1013 856.500V869" stroke="#ccc"/>
<path d="M781.700 858.300H789.700M782.200 866.300L785.700 862.300L789.200 866.300" stroke="#333" stroke-width="1.300"/>
<path d="M817.600 862.300L821.100 858.800L824.600 862.300M817.600 866.800L821.100 863.300L824.600 866.800" stroke="#333" stroke-width="1.300"/>
<path d="M950.800 858.600L954.300 862.100L957.800 858.600M950.800 863.100L954.300 866.600L957.800 863.100" stroke="#333" stroke-width="1.300"/>
<path d="M986.900 858.400L990.400 862.400L993.900 858.400M986.400 866.500H994.400" stroke="#333" stroke-width="1.300"/>
<path d="M1031.600 858.700L1039.600 866.700M1039.600 858.700L1031.600 866.700" stroke="#333" stroke-width="1.300"/>
</g>
<path d="M705.900 860.600H712.500L709.200 865Z" fill="#333"/>
<rect x="844.400" y="849.200" width="88" height="26.800" rx="5" fill="#fff"/>
</svg>
<div class="zt" style="left:61.300px;width:33px">151%</div>
<div class="zt" style="left:258px;width:14px;text-align:center">4</div>
<div class="zt" style="left:280px;width:14px;text-align:center">/</div>
<div class="zt" style="left:300px;width:20px;text-align:center">10</div>
</div>
</div>
</body>
</html>
